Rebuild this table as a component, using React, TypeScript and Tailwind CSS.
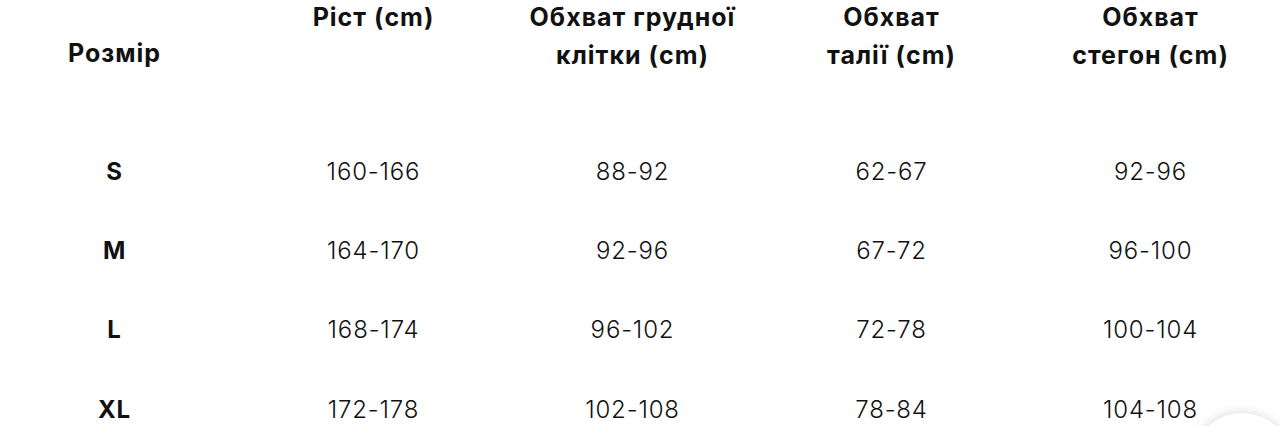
import React from 'react';

const headers = [
    ['Розмір'],
    ['Ріст (cm)'],
    ['Обхват грудної', 'клітки (cm)'],
    ['Обхват', 'талії (cm)'],
    ['Обхват', 'стегон (cm)'],
];

const rows = [
    ['S', '160-166', '88-92', '62-67', '92-96'],
    ['M', '164-170', '92-96', '67-72', '96-100'],
    ['L', '168-174', '96-102', '72-78', '100-104'],
    ['XL', '172-178', '102-108', '78-84', '104-108'],
];

const App: React.FC = () => {
    return (
        <main className="relative w-[1280px] h-[426px] overflow-hidden bg-white text-[#111] font-['Inter','Noto_Sans',sans-serif]">
            <div className="w-[1295px] -ml-[15px]">
                {/* Header */}
                <div className="grid grid-cols-5 items-start text-[25px] font-bold leading-[38px] tracking-[0.04em] -mt-[2px]">
                    {headers.map((h, i) => (
                        <div key={i} className={`text-center ${i === 0 ? 'pt-[36px]' : ''}`}>
                            {h.map((line, j) => (
                                <div key={j} className="whitespace-nowrap">{line}</div>
                            ))}
                        </div>
                    ))}
                </div>

                {/* Body */}
                <div className="mt-[58px]">
                    {rows.map((row, r) => (
                        <div key={r} className="grid grid-cols-5 items-center h-[79.4px] text-[24px] tracking-[0.035em]">
                            {row.map((cell, c) => (
                                <div key={c} className={`text-center ${c === 0 ? 'font-bold' : 'font-light'}`}>
                                    {cell}
                                </div>
                            ))}
                        </div>
                    ))}
                </div>
            </div>

            {/* floating button edge */}
            <div className="absolute left-[1192px] top-[413px] w-[100px] h-[100px] rounded-full bg-white shadow-[0_0_12px_rgba(0,0,0,0.16)]" />
        </main>
    );
};

export default App;
